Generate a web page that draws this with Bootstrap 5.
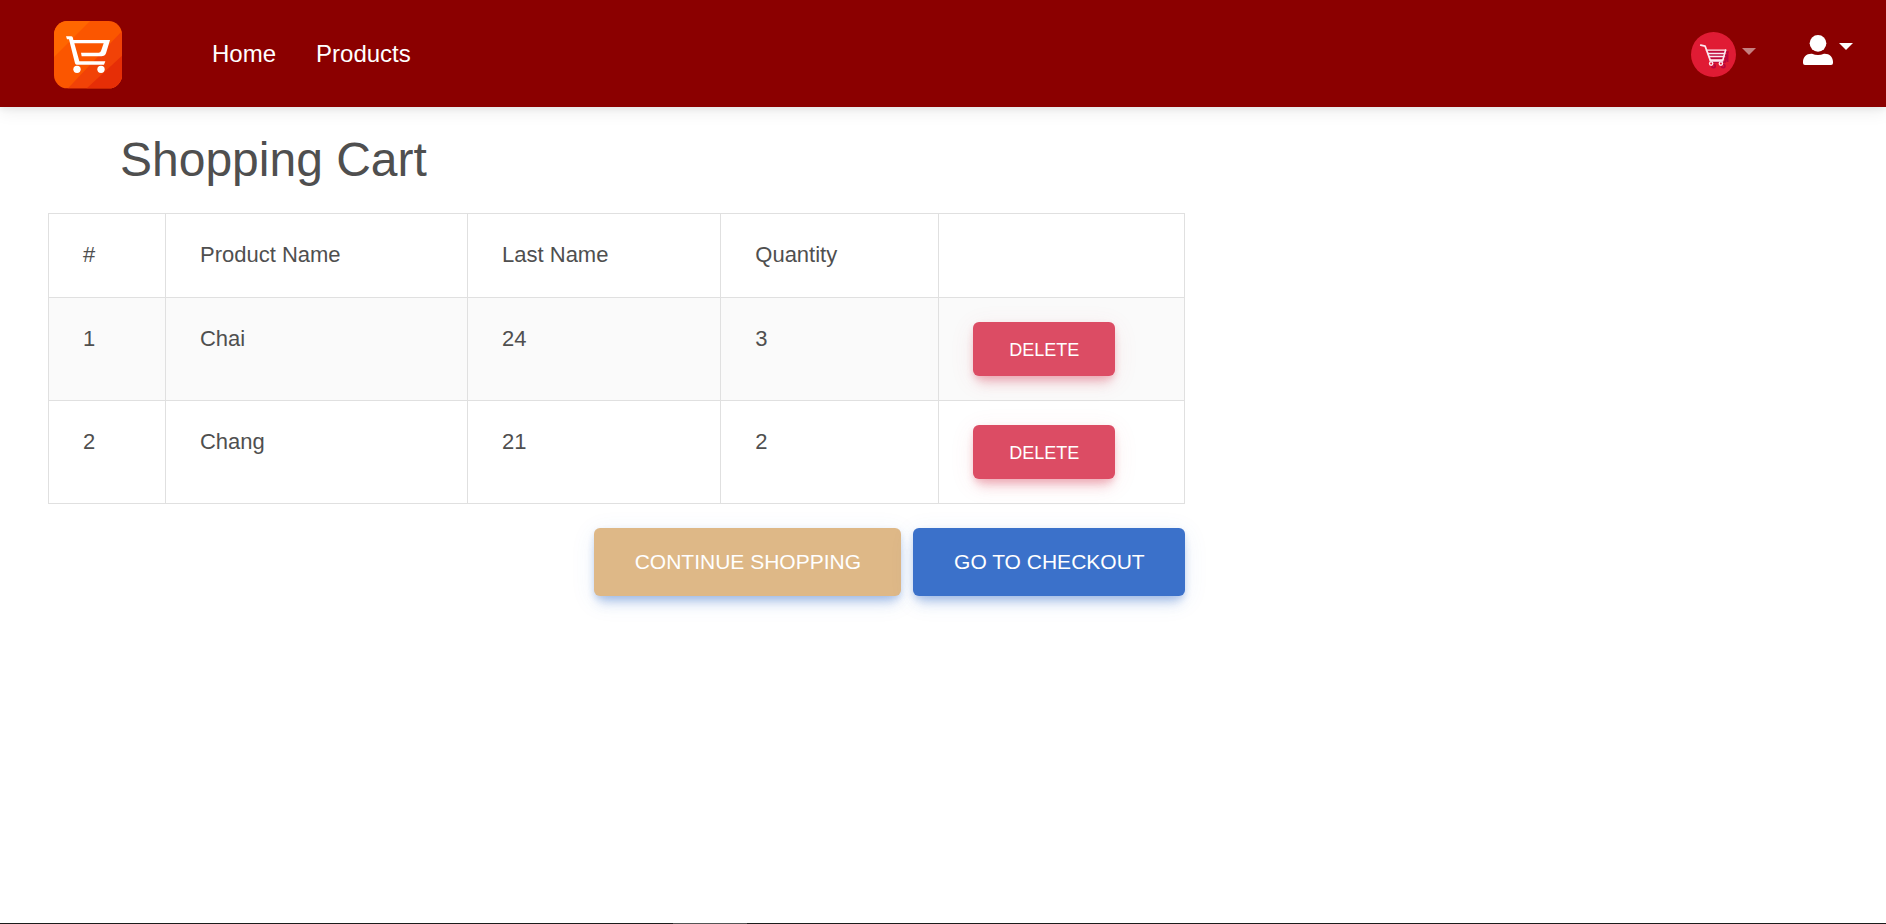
<!DOCTYPE html>
<html lang="en">
<head>
<meta charset="utf-8">
<meta name="viewport" content="width=device-width, initial-scale=1">
<title>Shopping Cart</title>
<link href="https://cdn.jsdelivr.net/npm/bootstrap@5.3.0/dist/css/bootstrap.min.css" rel="stylesheet">
<style>
  body { font-family: "Liberation Sans", Arial, sans-serif; font-size: 22px; line-height: 35px; color: #4f4f4f; background: #fff; }

  .site-nav { background: #8b0000; padding: 20px 33px 18px 54px; box-shadow: 0 5px 16px rgba(0,0,0,.07), 0 3px 5px rgba(0,0,0,.05); }
  .site-nav .navbar-brand { padding: 0; margin: 1px 70px 0 0; line-height: 1; }
  .site-nav .navbar-nav { margin-bottom: 2px; }
  .site-nav .navbar-nav .nav-link { color: #fff; font-size: 24px; line-height: 36px; padding: 0 20px; }
  .site-nav .toggle { background: none; border: 0; padding: 0; line-height: 1; gap: 6px; }
  .toggle .caret { border: 7px solid transparent; border-top-color: #fff; border-bottom: 0; margin-bottom: 7px; }
  .toggle .caret-dim { border-top-color: #c58080; margin-bottom: 6px; }
  .toggle-user { margin-bottom: 10px; }
  .nav-tools { gap: 47px; }

  .cart-area { padding: 24px 48px; }
  .cart-title { font-size: 48px; line-height: 58px; font-weight: 400; margin: 0 0 24px 72px; }
  .cart-panel { width: 100%; }
  @media (min-width: 1200px) { .cart-panel { width: 63.5%; } }

  .cart-table { --bs-table-color: #4f4f4f; --bs-table-striped-color: #4f4f4f; --bs-table-striped-bg: #fafafa; color: #4f4f4f; border-color: #e0e0e0; margin-bottom: 24px; }
  .cart-table > :not(caption) > * > * { padding: 23px 34px 25px; }
  .cart-table > tbody > tr > .cell-action { padding: 24px 34px; }
  .cart-table th { font-weight: 400; }
  .w-num { width: 10.3%; } .w-name { width: 26.6%; } .w-last { width: 22.3%; } .w-qty { width: 19.2%; }

  .btn-shop { --bs-btn-color: #fff; --bs-btn-hover-color: #fff; border: 0; border-radius: 6px; text-transform: uppercase; }
  .btn-remove { --bs-btn-bg: #dc4c64; --bs-btn-hover-bg: #c8455b; font-size: 18px; line-height: 26px; padding: 15px 36px 13px; box-shadow: 0 11px 12px -5px rgba(220,76,100,.3), 0 5px 24px rgba(220,76,100,.1), 0 3px 6px rgba(220,76,100,.2); }
  .btn-step { --bs-btn-bg: #3b71ca; --bs-btn-hover-bg: #3566b6; font-size: 21px; line-height: 36px; padding: 16px 40px 16px 41px; box-shadow: 0 11px 12px -5px rgba(59,113,202,.3), 0 5px 24px rgba(59,113,202,.1), 0 3px 6px rgba(59,113,202,.2); }
  .btn-back { --bs-btn-bg: #deb887; --bs-btn-hover-bg: #d3aa75; }
  .step-row { gap: 12px; }

  .end-strip { height: 1px; background: linear-gradient(90deg, #1c1c1c 35.7%, #555 35.7% 39.6%, #1c1c1c 39.6%); }
</style>
</head>
<body class="d-flex flex-column min-vh-100">

<nav class="navbar navbar-expand site-nav">
  <a class="navbar-brand" href="#" aria-label="Store">
    <svg class="d-block" width="68" height="68" viewBox="0 0 204 204" aria-hidden="true">
      <defs>
        <clipPath id="tile"><rect width="204" height="202" rx="40"/></clipPath>
      </defs>
      <g clip-path="url(#tile)">
        <rect width="204" height="204" fill="#fb5600"/>
        <path d="M0 0H108L0 108Z" fill="#ff6600"/>
        <path d="M204 30V204H40Z" fill="#f14207"/>
        <path d="M204 104V204H96Z" fill="#e62e06"/>
      </g>
      <path fill="#fff" d="M36 46H52Q56 47 57 51L58 57H168L156 97Q153 106 142 106H83L81 95H134Q139 95 141 90L149 67H61L76 121H154L150 131H68Q64 131 63 127L45 55H39Z"/>
      <circle cx="69" cy="145" r="11" fill="#fff"/><circle cx="141" cy="145" r="11" fill="#fff"/>
    </svg>
  </a>
  <ul class="navbar-nav">
    <li class="nav-item"><a class="nav-link" href="#">Home</a></li>
    <li class="nav-item"><a class="nav-link" href="#">Products</a></li>
  </ul>
  <div class="nav-tools d-flex align-items-center ms-auto">
    <button type="button" class="toggle d-flex align-items-center" aria-label="Cart">
      <svg width="45" height="45" viewBox="0 0 134 134" aria-hidden="true">
        <circle cx="67" cy="67" r="67" fill="#e01b34"/>
        <g fill="none" stroke="#b8063c" stroke-width="5" transform="translate(7 7)">
          <path d="M46 53H103L95 82H54M49 62H101M51 71H98M102 53V82"/><circle cx="60" cy="94" r="5"/><circle cx="89" cy="94" r="5"/>
        </g>
        <g fill="none" stroke="#fbe9f0" stroke-linecap="round" stroke-linejoin="round">
          <path stroke-width="5" d="M29 39L42 42L58 86H94M103 54L95 83"/>
          <path stroke-width="4" d="M46 54H103M50 64H100M53 73H98M56 83H95"/>
          <circle cx="60" cy="94" r="5" stroke-width="4"/><circle cx="89" cy="94" r="5" stroke-width="4"/>
        </g>
      </svg>
      <span class="caret caret-dim"></span>
    </button>
    <button type="button" class="toggle toggle-user d-flex align-items-center" aria-label="Account">
      <svg width="30" height="30" viewBox="0 0 90 90" fill="#fff" aria-hidden="true">
        <circle cx="45" cy="25" r="25"/>
        <path d="M27 56Q36 60 45 60T63 56C79 55 90 66 90 80V84Q90 90 84 90H6Q0 90 0 84V80C0 66 11 55 27 56Z"/>
      </svg>
      <span class="caret"></span>
    </button>
  </div>
</nav>

<main class="cart-area flex-grow-1">
  <h1 class="cart-title">Shopping Cart</h1>
  <div class="cart-panel">
    <table class="table table-bordered table-striped cart-table">
      <thead>
        <tr><th scope="col" class="w-num">#</th><th scope="col" class="w-name">Product Name</th><th scope="col" class="w-last">Last Name</th><th scope="col" class="w-qty">Quantity</th><td></td></tr>
      </thead>
      <tbody>
        <tr><th scope="row">1</th><td>Chai</td><td>24</td><td>3</td><td class="cell-action"><button type="button" class="btn btn-shop btn-remove d-block">Delete</button></td></tr>
        <tr><th scope="row">2</th><td>Chang</td><td>21</td><td>2</td><td class="cell-action"><button type="button" class="btn btn-shop btn-remove d-block">Delete</button></td></tr>
      </tbody>
    </table>
    <div class="step-row d-flex flex-wrap justify-content-end">
      <button type="button" class="btn btn-shop btn-step btn-back">Continue Shopping</button>
      <button type="button" class="btn btn-shop btn-step">Go to Checkout</button>
    </div>
  </div>
</main>

<div class="end-strip"></div>

<script src="https://cdn.jsdelivr.net/npm/bootstrap@5.3.0/dist/js/bootstrap.bundle.min.js"></script>
</body>
</html>
